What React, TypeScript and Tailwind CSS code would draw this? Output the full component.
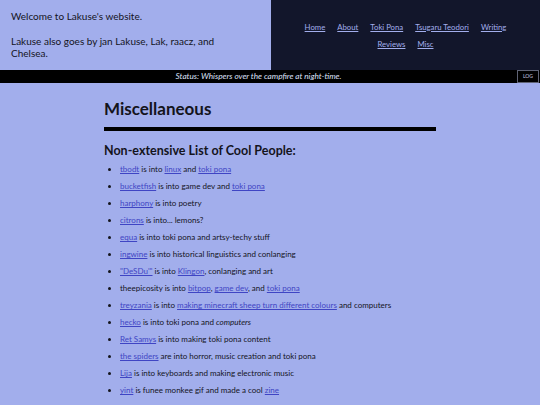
import React from 'react';

// Nav entries in the header
const navLinks = ['Home', 'About', 'Toki Pona', 'Tsugaru Teodori', 'Writing', 'Reviews', 'Misc'];

const A: React.FC<{ children: React.ReactNode }> = ({ children }) => (
  <a href="#" className="text-[#3f45c4] underline underline-offset-1">
    {children}
  </a>
);

const people: React.ReactNode[] = [
  <><A>tbodt</A> is into <A>linux</A> and <A>toki pona</A></>,
  <><A>bucketfish</A> is into game dev and <A>toki pona</A></>,
  <><A>harphony</A> is into poetry</>,
  <><A>citrons</A> is into... lemons?</>,
  <><A>equa</A> is into toki pona and artsy-techy stuff</>,
  <><A>ingwine</A> is into historical linguistics and conlanging</>,
  <><A>"DeSDu'"</A> is into <A>Klingon</A>, conlanging and art</>,
  <>theepicosity is into <A>bitpop</A>, <A>game dev</A>, and <A>toki pona</A></>,
  <><A>treyzania</A> is into <A>making minecraft sheep turn different colours</A> and computers</>,
  <><A>hecko</A> is into toki pona and <em className="italic">computers</em></>,
  <><A>Ret Samys</A> is into making toki pona content</>,
  <><A>the spiders</A> are into horror, music creation and toki pona</>,
  <><A>Lija</A> is into keyboards and making electronic music</>,
  <><A>yint</A> is funee monkee gif and made a cool <A>zine</A></>,
];

export default function App() {
  return (
    <div className="min-h-screen bg-[#a2aeec] text-[#14141c] font-['Lato',sans-serif]">
      {/* Header */}
      <header className="flex h-[70px]">
        <div className="w-[271px] pl-[11px] pr-[24px] pt-[10px] text-[10px] leading-[12.5px]">
          <p>Welcome to Lakuse's website.</p>
          <p className="mt-[12px]">Lakuse also goes by jan Lakuse, Lak, raacz, and Chelsea.</p>
        </div>
        <nav className="flex-1 bg-[#12162b] flex flex-wrap justify-center content-center gap-x-[12px] gap-y-[7px] px-[20px] text-[7.75px] leading-[10px]">
          {navLinks.map((l) => (
            <a key={l} href="#" className="text-[#a2aeec] underline underline-offset-1">
              {l}
            </a>
          ))}
        </nav>
      </header>

      {/* Status bar */}
      <div className="flex h-[13px] bg-black items-stretch">
        <div className="flex-1 flex items-center justify-center italic text-[8.2px] text-[#dfe3fa]">
          Status: Whispers over the campfire at night-time.
        </div>
        <button className="w-[22px] mr-[1px] border border-[#5f6375] text-[5px] text-[#c8cce0] leading-none">LOG</button>
      </div>

      {/* Main */}
      <main className="w-[332px] mx-auto pt-[16px] pb-4">
        <h1 className="text-[17px] font-bold leading-[20px]">Miscellaneous</h1>
        <div className="h-[4px] bg-black mt-[8px]" />
        <h2 className="text-[12.5px] font-bold mt-[12px] leading-[15px]">Non-extensive List of Cool People:</h2>
        <ul className="list-disc pl-[16px] mt-[3px] text-[8px] leading-[17px]">
          {people.map((p, i) => (
            <li key={i}>{p}</li>
          ))}
        </ul>
      </main>
    </div>
  );
}
